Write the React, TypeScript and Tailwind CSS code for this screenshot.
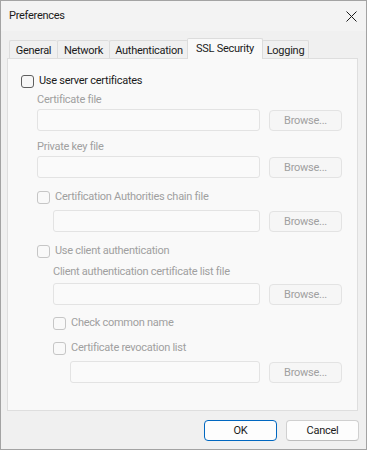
import React from 'react';

const Check: React.FC<{ enabled?: boolean }> = ({ enabled }) => (
  <span
    className={
      'block w-[13px] h-[13px] rounded-[3px] border shrink-0 ' +
      (enabled ? 'border-[#5f5f5f] bg-[#f7f7f7]' : 'border-[#c6c6c6] bg-[#f9f9f9]')
    }
  />
);

const CheckRow: React.FC<{ label: string; enabled?: boolean; className?: string }> = ({ label, enabled, className }) => (
  <div className={'flex items-center h-4 gap-[5px] ' + (className || '')}>
    <Check enabled={enabled} />
    <span className={enabled ? 'text-[#1b1b1b]' : 'text-[#a0a0a0]'}>{label}</span>
  </div>
);

const FileRow: React.FC<{ className?: string }> = ({ className }) => (
  <div className={'flex items-center gap-[9px] ' + (className || '')}>
    <div className="flex-1 h-[22px] rounded-[3px] border border-[#e3e3e3] bg-[#fafafa]" />
    <div className="w-[73px] h-[21px] pt-px rounded-[4px] border border-[#e3e3e3] bg-[#f6f6f6] flex items-center justify-center text-[#a0a0a0]">
      Browse...
    </div>
  </div>
);

const tabs: { name: string; w: string }[] = [
  { name: 'General', w: 'w-[48px]' },
  { name: 'Network', w: 'w-[52px]' },
  { name: 'Authentication', w: 'w-[79px]' },
  { name: 'SSL Security', w: 'w-[76px]' },
  { name: 'Logging', w: 'w-[47px]' },
];

export default function App() {
  return (
    <div className="w-[367px] h-[450px] border border-[#a3a3a3] bg-[#f0f0f0] flex flex-col font-['Roboto','Liberation_Sans',sans-serif] text-[11px] tracking-[-0.27px] leading-4 text-[#1b1b1b]">
      {/* title bar */}
      <div className="h-[30px] bg-[#f3f3f3] flex items-center justify-between pl-[8px] pr-[9px]">
        <span>Preferences</span>
        <svg width="11" height="11" viewBox="0 0 11 11" className="text-[#1b1b1b]">
          <path d="M0.5 0.5 L10.5 10.5 M10.5 0.5 L0.5 10.5" stroke="currentColor" strokeWidth="1" />
        </svg>
      </div>

      <div className="flex-1 flex flex-col pl-[6px] pr-[8px] pt-[7px]">
        {/* tabs */}
        <div className="flex items-end pl-[2px] h-[20px] relative z-10">
          {tabs.map(t =>
            t.name === 'SSL Security' ? (
              <div key={t.name} className={t.w + ' h-[21px] -mb-px pb-[1px] flex items-center justify-center border border-b-0 border-[#dcdcdc] bg-[#f9f9f9] rounded-t-[2px] -mx-px relative shrink-0'}>
                {t.name}
              </div>
            ) : (
              <div key={t.name} className={t.w + ' h-[18px] pt-[2px] flex items-center justify-center border border-b-0 border-r-0 last:border-r border-[#dcdcdc] bg-[#f0f0f0] rounded-t-[2px] shrink-0'}>
                {t.name}
              </div>
            )
          )}
        </div>

        {/* panel */}
        <div className="h-[353px] border border-[#dedede] bg-[#f9f9f9] pl-[13px] pr-[15px] pt-[14px] flex flex-col">
          <CheckRow label="Use server certificates" enabled />

          <div className="ml-[16px] mt-[3px] h-4 text-[#a0a0a0]">Certificate file</div>
          <FileRow className="ml-[16px] mt-[1px]" />

          <div className="ml-[16px] mt-[8px] h-4 text-[#a0a0a0]">Private key file</div>
          <FileRow className="ml-[16px] mt-[1px]" />

          <CheckRow label="Certification Authorities chain file" className="ml-[16px] mt-[11px]" />
          <FileRow className="ml-[32px] mt-[5px]" />

          <CheckRow label="Use client authentication" className="ml-[16px] mt-[11px]" />
          <div className="ml-[32px] mt-[5px] h-4 text-[#a0a0a0]">Client authentication certificate list file</div>
          <FileRow className="ml-[32px] mt-[3px]" />

          <CheckRow label="Check common name" className="ml-[32px] mt-[10px]" />
          <CheckRow label="Certificate revocation list" className="ml-[32px] mt-[9px]" />
          <FileRow className="ml-[49px] mt-[5px]" />
        </div>

        {/* buttons */}
        <div className="flex justify-end gap-[9px] mt-[9px] -mr-px">
          <div className="w-[73px] h-[21px] pt-px rounded-[4px] border border-[#0067c0] bg-[#fdfdfd] flex items-center justify-center">
            OK
          </div>
          <div className="w-[73px] h-[21px] pt-px rounded-[4px] border border-[#d0d0d0] border-b-[#bcbcbc] bg-[#fdfdfd] flex items-center justify-center">
            Cancel
          </div>
        </div>
      </div>
    </div>
  );
}
